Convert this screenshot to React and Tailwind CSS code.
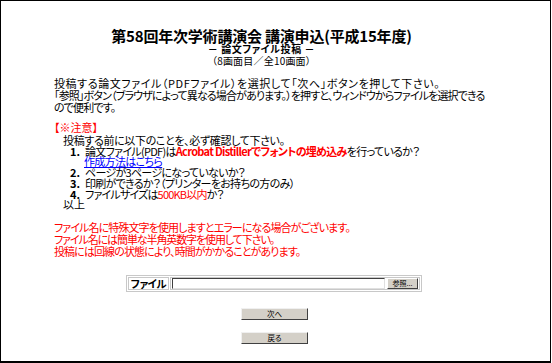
export default function App() {
  const jp = "font-['Noto_Sans_CJK_JP',sans-serif] [font-feature-settings:'palt']";

  return (
    <div className={`w-[552px] h-[363px] bg-white text-black ${jp}`}>
      <div className="w-[551px] h-[363px] border border-b-2 border-black flex flex-col">
        {/* HEADER */}
        <div className="pt-[27px] pr-[28px] flex flex-col items-center">
          <h1 className="text-[15px] leading-[16px] font-bold tracking-[-0.2px] whitespace-nowrap">
            第58回年次学術講演会 講演申込(平成15年度)
          </h1>
          <p className="mt-[-1px] text-[10px] leading-[12px] font-bold tracking-[0.6px] whitespace-nowrap">
            － 論文ファイル投稿 －
          </p>
          <p className="text-[10px] leading-[12px] tracking-[0.2px] whitespace-nowrap">
            （8画面目／全10画面）
          </p>
        </div>

        {/* INTRO */}
        <div className="mt-[10px] pl-[53px] text-[11px] leading-[12px] whitespace-nowrap">
          <p className="tracking-[0.6px]">
            投稿する論文ファイル（PDFファイル）を選択して「次へ」ボタンを押して下さい。
          </p>
          <p className="tracking-[-0.85px]">
            「参照」ボタン（ブラウザによって異なる場合があります。）を押すと、ウィンドウからファイルを選択できる
            <br />
            ので便利です。
          </p>
        </div>

        {/* NOTICE */}
        <div className="mt-[8px] pl-[53px] text-[11px] whitespace-nowrap">
          <p className="text-[#ff0000] leading-[12px]">【※注意】</p>
          <div className="mt-[2px] pl-[9px] leading-[10.7px]">
            <p className="tracking-[-0.35px]">投稿する前に以下のことを、必ず確認して下さい。</p>
            <div className="pl-[7px] tracking-[-0.7px]">
              <p>
                <span className="inline-block w-[15px] font-bold tracking-normal">1.</span>
                論文ファイル(PDF)は
                <span className="text-[#ff0000] font-bold">Acrobat Distillerでフォントの埋め込み</span>
                を行っているか？
              </p>
              <p className="pl-[14px]">
                <a href="#" className="text-[#0000ff] underline">作成方法はこちら</a>
              </p>
              <p>
                <span className="inline-block w-[15px] font-bold tracking-normal">2.</span>
                ページが3ページになっていないか？
              </p>
              <p>
                <span className="inline-block w-[15px] font-bold tracking-normal">3.</span>
                印刷ができるか？（プリンターをお持ちの方のみ）
              </p>
              <p className="tracking-[-0.8px]">
                <span className="inline-block w-[15px] font-bold tracking-normal">4.</span>
                ファイルサイズは
                <span className="text-[#ff0000]">500KB以内</span>か？
              </p>
            </div>
            <p>以上</p>
          </div>
        </div>

        {/* WARNING */}
        <div className="mt-[11px] pl-[53px] text-[11px] leading-[12px] text-[#ff0000] whitespace-nowrap">
          <p className="tracking-[-0.9px]">ファイル名に特殊文字を使用しますとエラーになる場合がございます。</p>
          <p className="tracking-[-1.1px]">ファイル名には簡単な半角英数字を使用して下さい。</p>
          <p className="tracking-[-0.9px]">投稿には回線の状態により、時間がかかることがあります。</p>
        </div>

        {/* FILE FORM */}
        <div className="mt-[18px] pl-[125px]">
          <div className="w-[296px] h-[17px] border border-[#c8c8c8] p-[1px] flex gap-[1px]">
            <div className="w-[41px] border border-[#c8c8c8] flex items-center justify-center text-[10.5px] leading-[11px] font-bold tracking-[-0.5px] whitespace-nowrap">
              ファイル
            </div>
            <div className="flex-1 border border-[#c8c8c8] flex items-center gap-[2px] px-[1px]">
              <div className="flex-1 h-[11px] bg-white border-t border-l border-[#404040] border-b border-r border-b-[#e0e0e0] border-r-[#e0e0e0]" />
              <button className="w-[31px] h-[11px] bg-[#d4d0c8] border-t border-l border-white border-b border-r border-b-[#404040] border-r-[#404040] text-[7px] leading-[9px] flex items-center justify-center whitespace-nowrap">
                参照...
              </button>
            </div>
          </div>
        </div>

        {/* BUTTONS */}
        <div className="mt-[16px] flex flex-col items-center gap-[12px] pr-[2px]">
          <button className="w-[67px] h-[12px] bg-[#d4d0c8] border-t border-l border-[#f0f0f0] border-b border-r border-b-[#404040] border-r-[#404040] text-[7.5px] leading-[10px] flex items-center justify-center">
            次へ
          </button>
          <button className="w-[67px] h-[12px] bg-[#d4d0c8] border-t border-l border-[#f0f0f0] border-b border-r border-b-[#404040] border-r-[#404040] text-[7.5px] leading-[10px] flex items-center justify-center">
            戻る
          </button>
        </div>
      </div>
    </div>
  );
}
